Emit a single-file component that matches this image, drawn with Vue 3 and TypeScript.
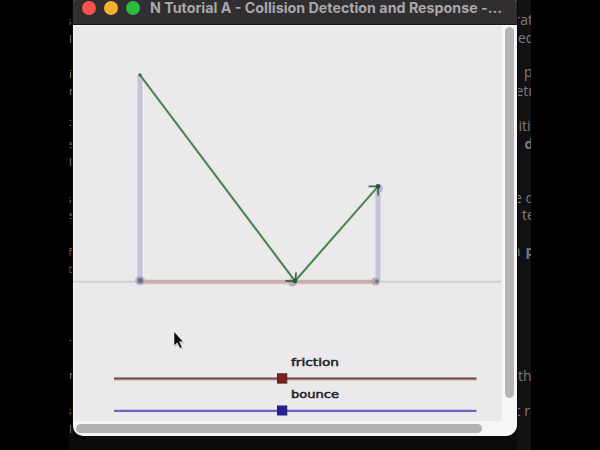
<script setup lang="ts">
interface Snippet { x: number; y: number; text: string; bold?: boolean }

const rightText: Snippet[] = [
  { x: 514.5, y: 25, text: 'rat' },
  { x: 518, y: 43, text: 'ed' },
  { x: 524, y: 77, text: 'p' },
  { x: 515.5, y: 96, text: 'etri' },
  { x: 518.5, y: 131, text: 'iti' },
  { x: 524.5, y: 149, text: 'd', bold: true },
  { x: 514, y: 203, text: 'e c' },
  { x: 522, y: 220, text: 'te' },
  { x: 512, y: 256, text: 'n' },
  { x: 525.5, y: 256, text: 'p', bold: true },
  { x: 518, y: 381, text: 'th' },
  { x: 514, y: 416, text: 'c r' },
]

const leftText: Snippet[] = [
  { x: 66, y: 25, text: 's' },
  { x: 69, y: 43, text: 'l' },
  { x: 69, y: 78, text: 'i' },
  { x: 69, y: 95, text: 'r' },
  { x: 66, y: 126, text: 'c' },
  { x: 66, y: 148, text: 'e' },
  { x: 69, y: 166, text: 'l' },
  { x: 66, y: 203, text: 's' },
  { x: 66, y: 219, text: 'e' },
  { x: 68, y: 256, text: 'f' },
  { x: 68, y: 273, text: 't' },
  { x: 68, y: 343, text: '-' },
  { x: 69, y: 379, text: 'r' },
  { x: 66, y: 415, text: 's' },
  { x: 69, y: 433, text: 'l' },
]
</script>

<template>
  <div class="screen">
    <svg class="page" width="600" height="450" viewBox="0 0 600 450">
      <defs>
        <clipPath id="right-strip"><rect x="518" y="0" width="13" height="450" /></clipPath>
        <clipPath id="left-strip"><rect x="69.5" y="0" width="2.5" height="450" /></clipPath>
      </defs>
      <rect x="69" y="430" width="462" height="20" fill="#0b0b0d" />
      <rect x="517" y="0" width="14" height="450" fill="#111114" />
      <g clip-path="url(#right-strip)" fill="#7b7b7d">
        <text v-for="s in rightText" :key="s.y + s.text" :x="s.x" :y="s.y" :class="{ bold: s.bold }">{{ s.text }}</text>
      </g>
      <g class="left" clip-path="url(#left-strip)" fill="#858587">
        <text v-for="s in leftText" :key="s.y" :x="s.x" :y="s.y">{{ s.text }}</text>
      </g>
    </svg>

    <div class="window">
      <header class="titlebar">
        <span class="light red"></span>
        <span class="light yellow"></span>
        <span class="light green"></span>
        <svg class="title" width="360" height="24" viewBox="0 0 360 24">
          <text x="0" y="13" textLength="352" lengthAdjust="spacingAndGlyphs">N Tutorial A - Collision Detection and Response -...</text>
        </svg>
      </header>
      <div class="body">
        <svg class="stage" width="429" height="396" viewBox="73 25 429 396">
          <path d="M73.5 421V25.5H502" stroke="#f7f5f8" stroke-width="1" fill="none" />
          <path d="M73 281.8H501" stroke="#d3d0d2" stroke-width="2" />
          <path d="M140 75V281M378 188V281" stroke="#c5c2d9" stroke-width="5" />
          <path d="M143.5 75V278" stroke="#f4f2f6" stroke-width="1" />
          <path d="M140 281.8H378" stroke="#c7adad" stroke-width="4" />
          <path d="M143 284.3H376" stroke="#f0d8d6" stroke-width="1" />
          <g fill="#aaa0a9" opacity=".75">
            <circle cx="140" cy="280.5" r="4.8" />
            <circle cx="292.5" cy="282.5" r="4" />
            <circle cx="375.5" cy="281.5" r="4" />
            <circle cx="379" cy="188.5" r="4" fill="#adabd0" />
          </g>
          <circle cx="140.3" cy="280.5" r="2.6" fill="#6c6a98" />
          <circle cx="377" cy="281.5" r="2" fill="#85727f" />
          <g fill="none" stroke="#bcdcbc" stroke-width="3.4" opacity=".6">
            <path d="M140 75L295 281L378 186.5" />
          </g>
          <g fill="none" stroke="#47794f" stroke-width="1.8">
            <path d="M140 75L295 281L378 186.5" />
            <path d="M285.5 281H295.5L296 272.5M368.5 186.3H378.2V195.5" stroke="#456b4c" />
          </g>
          <circle cx="295" cy="281" r="2.4" fill="#34523b" />
          <circle cx="378" cy="186.3" r="2.4" fill="#35465e" />
          <circle cx="140" cy="75" r="1.8" fill="#566665" />

          <path d="M114 380H477" stroke="#e0b7b5" stroke-width="1.3" />
          <path d="M114 378.5H476.5" stroke="#644848" stroke-width="1.9" />
          <path d="M114 410.8H476.5" stroke="#6c66bd" stroke-width="2.2" />
          <rect x="277.5" y="373.8" width="9.3" height="9.3" fill="#7d2024" stroke="#5c2528" />
          <rect x="277.5" y="406" width="9.3" height="9" fill="#25209a" stroke="#24245e" />
          <g class="label">
            <text x="291" y="365.5" textLength="48" lengthAdjust="spacingAndGlyphs">friction</text>
            <text x="291" y="398" textLength="48" lengthAdjust="spacingAndGlyphs">bounce</text>
          </g>

          <path d="M174 332V346.5L177.2 343.5L179.8 349L182.2 347.8L179.8 342.6H183.3Z" fill="#b9b8ba" transform="translate(1 1)" opacity=".7" />
          <path d="M174 331.5V345.8L177.2 342.7L179.9 348.3L182 347.2L179.5 341.7H183.2Z" fill="#0b0b0c" stroke="#fff" stroke-width=".5" />
        </svg>
        <div class="track-y"><div class="thumb-y"></div></div>
        <div class="track-x"><div class="thumb-x"></div></div>
      </div>
    </div>
  </div>
</template>

<style>
body { margin: 0; background: #000; }
</style>

<style scoped>
.screen {
  position: relative;
  width: 600px;
  height: 450px;
  overflow: hidden;
  background: #000;
}
.page { display: block; font: 14px "Open Sans", sans-serif; }
.left { font-size: 11px; }
.bold { font-weight: 700; }
.window {
  position: absolute;
  left: 73px;
  top: 0;
  width: 444px;
  height: 436px;
  overflow: hidden;
  border-radius: 3px 3px 11px 10px;
  background: #f7f5f8;
  box-shadow: 0 0 0 1px #09090a;
}
.titlebar {
  box-sizing: border-box;
  display: flex;
  align-items: flex-start;
  gap: 8px;
  height: 25px;
  padding-left: 8.5px;
  background: #302e31;
  border-bottom: 1px solid #151416;
}
.light {
  flex: none;
  width: 14px;
  height: 14px;
  margin-top: 1px;
  border-radius: 50%;
}
.red { background: #f8524f; }
.yellow { background: #f3b02e; }
.green { background: #2cbb3c; }
.title {
  margin-left: 2px;
  font: 700 14px Inter, sans-serif;
  fill: #a9a7aa;
}
.body {
  display: grid;
  grid-template-columns: 429px 15px;
  grid-template-rows: 396px 15px;
}
.stage { display: block; background: #ebe9eb; }
.label { font: 10.5px "DejaVu Sans", sans-serif; fill: #242325; stroke: #242325; stroke-width: .5px; }
.track-y { padding: 2px 3px 0; }
.thumb-y { width: 9px; height: 371px; border-radius: 5px; background: #b6b4b6; }
.track-x { padding: 3px 0 0 3px; }
.thumb-x { width: 406px; height: 9px; border-radius: 5px; background: #b3b1b4; }
</style>
